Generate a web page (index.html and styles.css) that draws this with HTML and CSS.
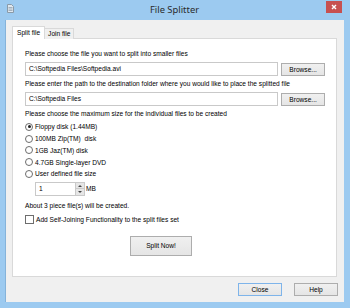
FILE: index.html
```html
<!DOCTYPE html>
<html lang="en">
<head>
  <meta charset="UTF-8" />
  <meta name="viewport" content="width=device-width, initial-scale=1.0" />
  <title>File Splitter</title>
  <link rel="stylesheet" href="styles.css">
</head>
<body>
  <div class="window">
    <div class="titlebar">
      <div class="app-icon">
        <svg width="7" height="9" viewBox="0 0 7 9">
          <path d="M0.5 0.5h4l2 2v6h-6z" fill="#dfe8f0" stroke="#8a9aa8" stroke-width="1"/>
          <path d="M1.5 3.5h4M1.5 5h4M1.5 6.5h4" stroke="#8a9aa8" stroke-width="0.7"/>
        </svg>
      </div>
      <div class="title">File Splitter</div>
      <div class="title-actions">
        <div class="close-btn">
          <svg width="6" height="6" viewBox="0 0 6 6">
            <path d="M1 1l4 4M5 1l-4 4" stroke="#fff" stroke-width="1.4"/>
          </svg>
        </div>
      </div>
    </div>

    <div class="client">
      <div class="tabs">
        <div class="tab active">Split file</div>
        <div class="tab">Join file</div>
      </div>

      <div class="panel">
        <p class="label first">Please choose the file you want to split into smaller files</p>
        <div class="path-row">
          <div class="field">C:\Softpedia Files\Softpedia.avi</div>
          <div class="btn">Browse...</div>
        </div>

        <p class="label">Please enter the path to the destination folder where you would like to place the splitted file</p>
        <div class="path-row">
          <div class="field">C:\Softpedia Files</div>
          <div class="btn">Browse...</div>
        </div>

        <p class="label">Please choose the maximum size for the individual files to be created</p>
        <div class="radios">
          <div class="radio"><span class="dot checked"></span>Floppy disk (1.44MB)</div>
          <div class="radio"><span class="dot"></span>100MB Zip(TM)&nbsp; disk</div>
          <div class="radio"><span class="dot"></span>1GB Jaz(TM) disk</div>
          <div class="radio"><span class="dot"></span>4.7GB Single-layer DVD</div>
          <div class="radio"><span class="dot"></span>User defined file size</div>
        </div>

        <div class="spin-row">
          <div class="spin">
            <span class="spin-value">1</span>
            <div class="spin-arrows">
              <span class="arrow up"></span>
              <span class="arrow down"></span>
            </div>
          </div>
          <span class="unit">MB</span>
        </div>

        <p class="label about">About 3 piece file(s) will be created.</p>
        <div class="check"><span class="box"></span>Add Self-Joining Functionality to the split files set</div>

        <div class="split-row">
          <div class="btn split">Split Now!</div>
        </div>
      </div>

      <div class="footer">
        <div class="btn default">Close</div>
        <div class="btn">Help</div>
      </div>
    </div>
  </div>
</body>
</html>
```

FILE: styles.css
```css
body {
  margin: 0;
  padding: 0;
  font-family: "Liberation Sans", Arial, sans-serif;
  font-size: 6.6px;
  color: #000;
  background: #fff;
}
.window {
  width: 350px;
  height: 308px;
  box-sizing: border-box;
  padding: 0 6px 6px 5px;
  background: #9ccaf0;
  display: flex;
  flex-direction: column;
}
.titlebar {
  height: 20px;
  display: grid;
  grid-template-columns: 1fr auto 1fr;
  align-items: start;
}
.app-icon {
  padding: 4px 0 0 2px;
}
.title {
  font-family: "Noto Sans", "Open Sans", sans-serif;
  font-size: 9.4px;
  color: #2b2b2b;
  line-height: 19px;
}
.title-actions {
  display: flex;
  justify-content: flex-end;
}
.close-btn {
  width: 16px;
  height: 12px;
  margin: 1px 2px 0 0;
  background: #c75050;
  display: flex;
  align-items: center;
  justify-content: center;
}
.client {
  flex: 1;
  background: #f0f0f0;
  border-left: 1px solid #85b3da;
  display: flex;
  flex-direction: column;
  padding: 6px 7px 0 6px;
}
.tabs {
  display: flex;
  align-items: flex-end;
  margin-bottom: -1px;
  position: relative;
  z-index: 1;
}
.tab {
  height: 10px;
  line-height: 10px;
  padding: 0 3px;
  border: 1px solid #d9d9d9;
  border-bottom: none;
  background: #f0f0f0;
}
.tab.active {
  height: 12px;
  padding: 0 4px;
  background: #fff;
  line-height: 11px;
}
.tab + .tab {
  margin-left: -1px;
}
.panel {
  flex: 1;
  background: #fff;
  border: 1px solid #d9d9d9;
  padding: 0 11px 0 12px;
}
.label {
  margin: 3px 0 0;
  line-height: 10px;
  white-space: nowrap;
}
.label.first {
  margin-top: 10px;
}
.path-row {
  display: flex;
  align-items: center;
  gap: 3px;
  margin-top: 3px;
  height: 14px;
}
.field {
  width: 249px;
  height: 12px;
  line-height: 12px;
  border: 1px solid #c9c9c9;
  padding: 0 0 0 3px;
}
.btn {
  height: 11px;
  line-height: 11px;
  width: 42px;
  text-align: center;
  background: linear-gradient(#f0f0f0, #e5e5e5);
  border: 1px solid #adadad;
}
.radios {
  margin-top: 2px;
}
.radio,
.check {
  display: flex;
  align-items: center;
  height: 11.75px;
  gap: 2px;
}
.dot {
  width: 6px;
  height: 6px;
  border: 1px solid #6d6d6d;
  border-radius: 50%;
  background: #fff;
  position: relative;
}
.dot.checked::after {
  content: "";
  position: absolute;
  left: 1.5px;
  top: 1.5px;
  width: 3px;
  height: 3px;
  border-radius: 50%;
  background: #1f1f1f;
}
.spin-row {
  display: flex;
  align-items: center;
  margin: 2px 0 0 10px;
  height: 14px;
}
.spin {
  display: flex;
  height: 12px;
  border: 1px solid #c9c9c9;
  width: 48px;
}
.spin-value {
  flex: 1;
  padding-left: 3px;
  line-height: 12px;
}
.spin-arrows {
  width: 8px;
  display: flex;
  flex-direction: column;
  background: #e6e6e6;
  border-left: 1px solid #c9c9c9;
}
.arrow {
  flex: 1;
  display: flex;
  align-items: center;
  justify-content: center;
}
.arrow.up {
  border-bottom: 1px solid #c9c9c9;
}
.arrow.up::after,
.arrow.down::after {
  content: "";
  border-left: 2px solid transparent;
  border-right: 2px solid transparent;
}
.arrow.up::after {
  border-bottom: 2px solid #444;
}
.arrow.down::after {
  border-top: 2px solid #444;
}
.unit {
  margin-left: 1px;
}
.label.about {
  margin-top: 5px;
}
.check {
  margin-top: 3px;
  height: 12px;
}
.box {
  width: 7px;
  height: 7px;
  border: 1px solid #6d6d6d;
  background: #fff;
}
.split-row {
  margin: 10px 0 0 105px;
}
.btn.split {
  width: 60px;
  height: 18px;
  line-height: 18px;
}
.footer {
  display: flex;
  justify-content: flex-end;
  gap: 12px;
  padding: 6px 0 6px;
  margin-right: -1px;
}
.footer .btn {
  height: 11px;
  line-height: 11px;
}
.btn.default {
  border-color: #7eb4ea;
}
```
